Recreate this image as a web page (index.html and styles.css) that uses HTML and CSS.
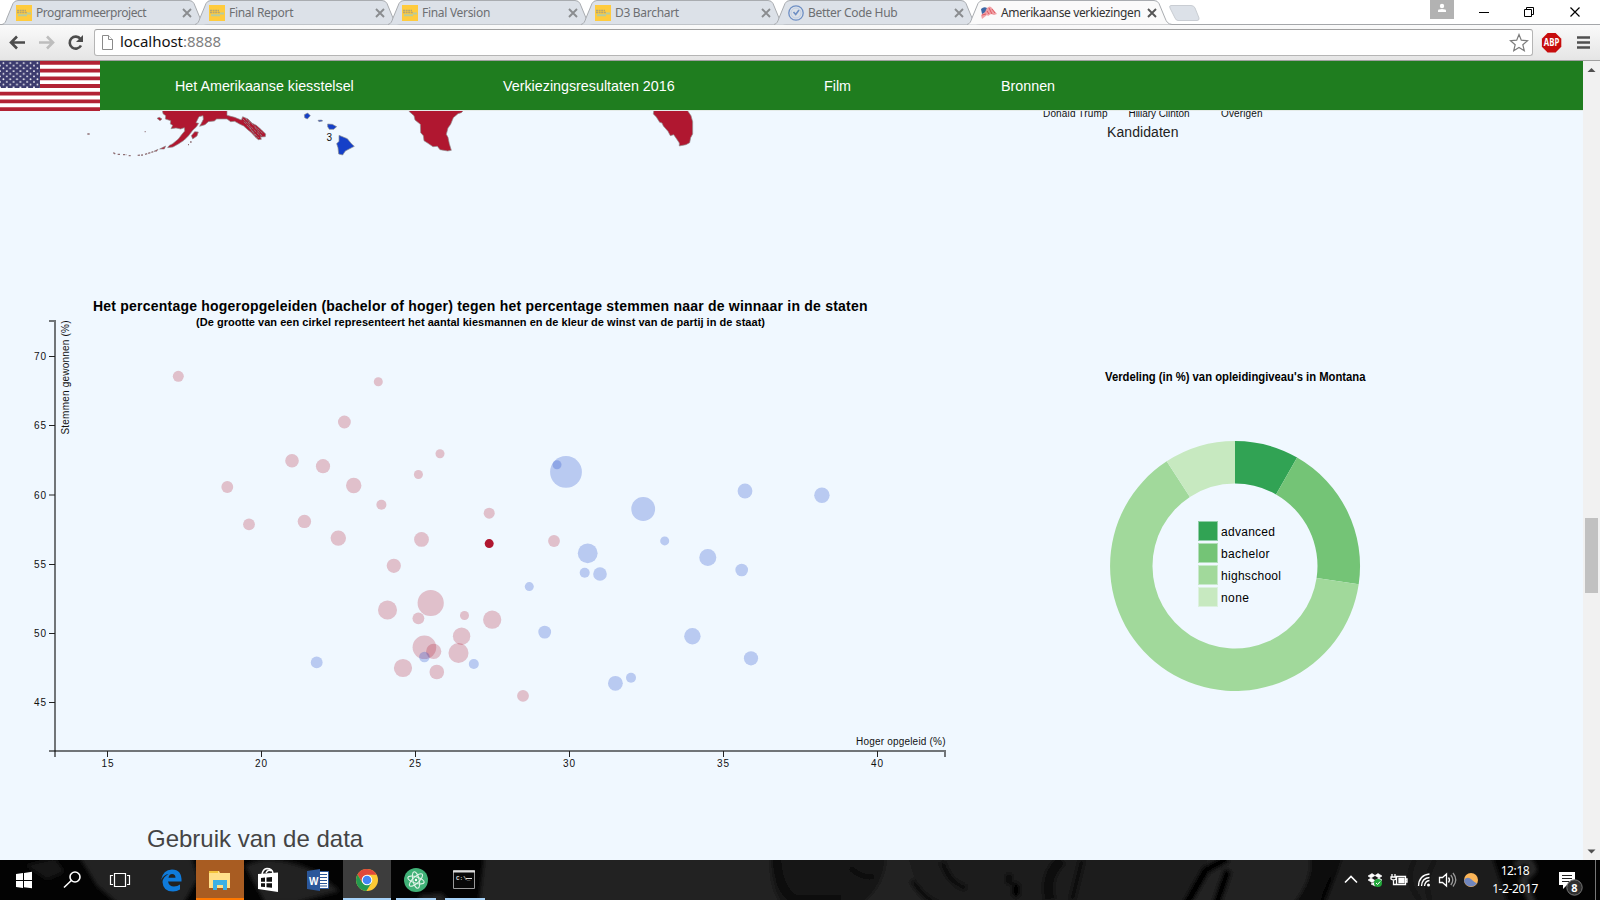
FILE: index.html
```html
<!DOCTYPE html>
<html lang="nl">
<head>
<meta charset="utf-8">
<title>Amerikaanse verkiezingen</title>
<link rel="stylesheet" href="styles.css">
</head>
<body>
<svg class="defs" width="0" height="0">
  <defs>
    <symbol id="tab-shape" viewBox="0 0 208 25">
      <path d="M0 24.5C3 24 4 21 5 18L11 3.5Q12.500 .5 16 .5H187Q190.500 .5 192 3.500L198 18C199.500 22 201 24 205 24.500"/>
    </symbol>
    <symbol id="site" viewBox="0 0 16 16">
      <rect width="16" height="16" fill="#ffcb3d"/>
      <path d="M1 5.500h9M1 7.500h10" stroke="#b5a672" stroke-width="1.300" stroke-dasharray="2 .6"/>
      <path d="M2 10.200h9M11 8.500h4" stroke="#b5cba0" stroke-width="2"/>
    </symbol>
    <symbol id="cross" viewBox="0 0 10 10"><path d="M1 1l8 8M9 1L1 9" stroke="currentColor" stroke-width="1.900"/></symbol>
  </defs>
</svg>

<div class="tabstrip">
  <div class="tab"><svg class="shape"><use href="#tab-shape"/></svg><svg class="fav"><use href="#site"/></svg><span class="t1">Programmeerproject</span><svg class="x"><use href="#cross"/></svg></div>
  <div class="tab"><svg class="shape"><use href="#tab-shape"/></svg><svg class="fav"><use href="#site"/></svg><span>Final Report</span><svg class="x"><use href="#cross"/></svg></div>
  <div class="tab"><svg class="shape"><use href="#tab-shape"/></svg><svg class="fav"><use href="#site"/></svg><span>Final Version</span><svg class="x"><use href="#cross"/></svg></div>
  <div class="tab"><svg class="shape"><use href="#tab-shape"/></svg><svg class="fav"><use href="#site"/></svg><span>D3 Barchart</span><svg class="x"><use href="#cross"/></svg></div>
  <div class="tab"><svg class="shape"><use href="#tab-shape"/></svg><svg class="fav" viewBox="0 0 16 16" fill="none" stroke="#6e8fc4"><circle cx="8" cy="8" r="7.200" stroke-width="1.300"/><circle cx="8" cy="8" r="5" stroke="#b9c9e2" stroke-width=".8"/><path d="M5.500 7l2.200 2.500L11 5" stroke-width="1.600"/></svg><span>Better Code Hub</span><svg class="x"><use href="#cross"/></svg></div>
  <div class="tab active"><svg class="shape"><use href="#tab-shape"/></svg><svg class="fav" viewBox="0 0 16 16"><path d="M0 4Q3 1 6 3L5 8 1 9z" fill="#3c67a5"/><path d="M6 3q3-3 5 0l5 6-3 1-3-1-3 2-1-1-5 4-1-4 4-3z" fill="#f0a0a5"/><path d="M8 3l3 6M6 6l2 3M11 4l3 4M1 10l4-1" stroke="#df5a62"/></svg><span class="t6">Amerikaanse verkiezingen</span><svg class="x"><use href="#cross"/></svg></div>
  <svg class="newtab" width="34" height="24"><path d="M3 5.500H23Q26 5.500 27 8L31 18Q31.500 20.500 29 20.500H10Q8 20.500 7 18L2 8Q1 5.500 3 5.500z" fill="#dce1e8" stroke="#c9cdd3"/></svg>
  <div class="wincontrols">
    <svg width="24" height="19"><rect width="24" height="19" fill="#b2b2b2"/><circle cx="12" cy="6" r="2.200" fill="#fff"/><path d="M8 12V10.500Q8 9 12 9T16 10.500V12z" fill="#fff"/></svg>
    <svg class="ctl" viewBox="0 0 130 24" fill="none" stroke="#000"><path d="M9 12.500H19"/><path d="M54.500 9.500h7v7h-7zM56.500 9.500v-2h7v7h-2"/><path d="M100.500 7.500l9 9M109.500 7.500l-9 9" stroke-width="1.200"/></svg>
  </div>
</div>

<div class="toolbar">
  <svg width="94" height="36" viewBox="0 25 94 36" fill="none" stroke-width="2.600">
    <path d="M25 42.500H11.500M17 36.500l-6 6 6 6" stroke="#4c4c4c"/>
    <path d="M39 42.500H52.500M47 36.500l6 6-6 6" stroke="#bdbdbd"/>
    <path d="M80.500 39A6 6 0 1 0 81 45.500" stroke="#4c4c4c"/><path d="M83 35v7h-7z" fill="#4c4c4c"/>
  </svg>
  <div class="omnibox">
    <svg width="14" height="17" viewBox="0 0 14 17" fill="#fff" stroke="#8a8a8a"><path d="M1.500 1.500h6l4 4v10h-10z"/><path d="M7.500 1.500v4h4"/></svg>
    <span class="url">localhost<span class="port">:8888</span></span>
    <svg class="star" width="20" height="20" viewBox="0 0 20 20"><path d="M10 1.500l2.300 5.700 6.200.5-4.700 4 1.500 6L10 14.400l-5.300 3.300 1.500-6-4.700-4 6.200-.5z" fill="#fff" stroke="#7c7c7c" stroke-width="1.200"/></svg>
  </div>
  <svg width="67" height="36" viewBox="1533 25 67 36">
    <path d="M1547.600 33h8l5.700 5.700v8l-5.700 5.700h-8l-5.700-5.700v-8z" fill="#c70d0d"/>
    <text x="1543.800" y="46.300" textLength="15.500" lengthAdjust="spacingAndGlyphs" class="abp">ABP</text>
    <path d="M1577 37.500h13M1577 42.500h13M1577 47.500h13" stroke="#505050" stroke-width="2.700"/>
  </svg>
</div>

<div class="viewport">
  <div class="page">
    <nav class="nav">
      <svg class="flag" viewBox="0 0 100 50" width="100" height="50">
        <defs><pattern id="stars" width="6.800" height="5.400" patternUnits="userSpaceOnUse"><circle cx="3.400" cy="2" r=".9" fill="#fff"/><circle cx="0" cy="4.700" r=".9" fill="#fff"/><circle cx="6.800" cy="4.700" r=".9" fill="#fff"/></pattern></defs>
        <rect width="100" height="50" fill="#fff"/>
        <path d="M0 1.920H100M0 9.610H100M0 17.310H100M0 25H100M0 32.690H100M0 40.380H100M0 48.080H100" stroke="#b22234" stroke-width="3.850"/>
        <rect width="40" height="27" fill="#3c3b6e"/><rect width="40" height="27" fill="url(#stars)"/>
      </svg>
      <a class="n1">Het Amerikaanse kiesstelsel</a>
      <a class="n2">Verkiezingsresultaten 2016</a>
      <a class="n3">Film</a>
      <a class="n4">Bronnen</a>
    </nav>

    <svg class="map" viewBox="0 111 1583 169" width="1583" height="169">
      <g transform="scale(.33333)" stroke="#8f8f8f" stroke-width="2" stroke-linejoin="round">
        <g fill="#b01730">
          <path d="M486 325L489 341 497 347 496 357 512 362 511 372 518 376 513 386 528 384 542 387 553 383 554 393 544 405 535 417 518 431 507 437 503 443 519 441 535 432 552 421 565 408 579 390 589 381 596 370 588 368 597 350 609 347 610 358 604 370 599 379 615 374 625 365 643 363 650 357 681 357 692 365 704 364 720 373 731 378 743 389 753 397 765 410 775 419 784 418 782 411 796 410 797 402 784 389 769 376 757 370 744 357 728 350 724 360 704 352 681 346 681 325z"/>
          <path d="M471 355l7-3 8 5-6 5zM574 407l10-12 11 1-4 12-13 9zM497 438l-18 9 14 0zM474 448l-12 6 8 0z"/>
          <path d="M26 325L28 335 42 347 45 360 61 373 62 398 70 407 72 422 84 430 99 440 112 439 120 449 143 453 154 451 148 431 144 412 139 403 144 384 152 373 160 353 174 341 184 338 190 332V325z" transform="translate(1200)"/>
          <path d="M1962 325l-2 17 9 9 10 16 7 2 4 9 14 16 7 13 10-3 9 13 8 12 0 9 20-4 11-6 3-15 6-11 0-37-5-18-9-13v-10z"/>
        </g>
        <path d="M728 356l54 53M732 365l44 49M745 362l43 38M748 380l22 35M737 355l14 20M765 382l21 27" stroke-width="2.500" stroke-dasharray="9 3" fill="none"/>
        <path d="M262 402h8M434 395h3M564 434h3M570 426h5M340 458l6 4M353 463h7M369 464h11M386 467h6M413 466l16-1M435 463l25-8" fill="none" stroke="#8f7075" stroke-width="4" stroke-dasharray="7 3"/>
        <g fill="#1540c8">
          <path d="M913 344l10-5 8 8-9 10-8-4zM954 361l11-1 3 3-11 2zM983 372l14 1 13 7-9 8-13 0-5-8zM1017 406l25 10 13 16 8 7-27 14-8 12-12-3-2-19-4-12 7-7z"/>
        </g>
      </g>
      <g class="t10">
        <text x="326.500" y="141" textLength="5.500">3</text>
        <text x="1043" y="117.200" textLength="64.500">Donald Trump</text>
        <text x="1128.500" y="117.200" textLength="61">Hillary Clinton</text>
        <text x="1221" y="117.200" textLength="41.500">Overigen</text>
      </g>
      <text x="1107" y="137" class="t14" textLength="71.500">Kandidaten</text>
    </svg>

    <div class="charts">
      <svg viewBox="0 280 1000 506" width="1000" height="506">
        <g class="bold">
          <text x="93" y="311" font-size="14" textLength="774.500">Het percentage hogeropgeleiden (bachelor of hoger) tegen het percentage stemmen naar de winnaar in de staten</text>
          <text x="196" y="326" font-size="11" textLength="569">(De grootte van een cirkel representeert het aantal kiesmannen en de kleur de winst van de partij in de staat)</text>
        </g>
        <g stroke="#000" stroke-opacity=".53" stroke-width="2" fill="none">
          <path d="M49 321H55V751H49"/>
          <path d="M55 757V751H945V757"/>
        </g>
        <path d="M49 356.500h6M49 425.500h6M49 495h6M49 564.500h6M49 633.500h6M49 702.500h6M107.500 751v6M261.500 751v6M415.500 751v6M569.500 751v6M723.500 751v6M877.500 751v6" stroke="#222"/>
        <g class="t10">
          <text x="34" y="360.300" textLength="12">70</text><text x="34" y="429.300" textLength="12">65</text><text x="34" y="498.500" textLength="12">60</text><text x="34" y="568" textLength="12">55</text><text x="34" y="637" textLength="12">50</text><text x="34" y="706.300" textLength="12">45</text>
          <text x="101.500" y="767" textLength="12">15</text><text x="255" y="767" textLength="12">20</text><text x="409" y="767" textLength="12">25</text><text x="563" y="767" textLength="12">30</text><text x="717" y="767" textLength="12">35</text><text x="871" y="767" textLength="12">40</text>
        </g>
        <text class="t10" x="856" y="745" textLength="89.500">Hoger opgeleid (%)</text>
        <text class="t10" transform="translate(68.500 434.500) rotate(-90)" textLength="114">Stemmen gewonnen (%)</text>
        <g class="rep">
          <circle cx="178.300" cy="376.300" r="5.500"/><circle cx="378.300" cy="381.700" r="4.500"/><circle cx="344.400" cy="422" r="6.400"/><circle cx="292" cy="460.700" r="6.800"/><circle cx="323" cy="466.200" r="7.100"/><circle cx="440" cy="453.700" r="4.500"/><circle cx="418.400" cy="474.500" r="4.500"/><circle cx="227.300" cy="487" r="5.900"/><circle cx="353.700" cy="485.500" r="7.700"/><circle cx="381.400" cy="504.800" r="5"/><circle cx="249" cy="524.300" r="5.900"/><circle cx="304.400" cy="521.400" r="6.700"/><circle cx="338.300" cy="538.100" r="7.700"/><circle cx="421.500" cy="539.400" r="7.400"/><circle cx="489.200" cy="513.200" r="5.500"/><circle cx="393.800" cy="565.800" r="7.100"/><circle cx="554" cy="541" r="5.900"/><circle cx="430.700" cy="603" r="13.100"/><circle cx="387.500" cy="610" r="9.500"/><circle cx="418.400" cy="618.300" r="5.900"/><circle cx="464.500" cy="615.500" r="4.500"/><circle cx="492.200" cy="619.700" r="9.100"/><circle cx="461.600" cy="636.200" r="8.700"/><circle cx="424.400" cy="647.300" r="11.800"/><circle cx="433.700" cy="651.400" r="7.600"/><circle cx="458.500" cy="653" r="10"/><circle cx="403" cy="668" r="9.100"/><circle cx="436.800" cy="672" r="7.300"/><circle cx="523" cy="695.800" r="5.900"/>
          <circle class="on" cx="489.200" cy="543.600" r="4.500"/>
        </g>
        <g class="dem">
          <circle cx="566" cy="471.900" r="15.900"/><circle cx="557" cy="464.700" r="4.500"/><circle cx="745" cy="491" r="7.400"/><circle cx="821.900" cy="495.300" r="7.700"/><circle cx="643.200" cy="509" r="11.900"/><circle cx="664.700" cy="540.900" r="4.500"/><circle cx="587.700" cy="553.300" r="9.900"/><circle cx="584.700" cy="572.700" r="5"/><circle cx="600" cy="574" r="6.800"/><circle cx="707.800" cy="557.400" r="8.500"/><circle cx="741.700" cy="570" r="6.300"/><circle cx="424.400" cy="657" r="5.300"/><circle cx="316.700" cy="662.400" r="5.900"/><circle cx="473.800" cy="664" r="5"/><circle cx="529.300" cy="586.600" r="4.500"/><circle cx="544.700" cy="632.100" r="6.400"/><circle cx="692.400" cy="636.200" r="8.200"/><circle cx="751" cy="658.300" r="7.100"/><circle cx="615.400" cy="683.300" r="7.400"/><circle cx="631" cy="677.700" r="5"/>
        </g>
      </svg>

      <svg viewBox="1000 280 583 506" width="583" height="506">
        <text class="bold" x="1105" y="381" font-size="12" textLength="260.500" lengthAdjust="spacingAndGlyphs">Verdeling (in %) van opleidingiveau's in Montana</text>
        <path fill="#31a354" d="M1235 441A125 125 0 0 1 1297.100 457.500L1276 494.400A82.500 82.500 0 0 0 1235 483.500z"/>
        <path fill="#74c476" d="M1297.100 457.500A125 125 0 0 1 1358.700 584.300L1316.600 578.050A82.500 82.500 0 0 0 1276 494.400z"/>
        <path fill="#a1d99b" d="M1358.700 584.300A125 125 0 1 1 1166.700 461.300L1189.900 496.900A82.500 82.500 0 1 0 1316.600 578.050z"/>
        <path fill="#c7e9c0" d="M1166.700 461.300A125 125 0 0 1 1235 441V483.500A82.500 82.500 0 0 0 1189.900 496.900z"/>
        <g class="legend">
          <rect x="1199" y="522" width="18" height="18" fill="#31a354" stroke="#31a354"/><rect x="1199" y="544" width="18" height="18" fill="#74c476" stroke="#74c476"/><rect x="1199" y="566" width="18" height="18" fill="#a1d99b" stroke="#a1d99b"/><rect x="1199" y="588" width="18" height="18" fill="#c7e9c0" stroke="#c7e9c0"/>
          <text x="1221" y="536" textLength="54">advanced</text><text x="1221" y="558" textLength="48.500">bachelor</text><text x="1221" y="580" textLength="60">highschool</text><text x="1221" y="602" textLength="28">none</text>
        </g>
      </svg>
    </div>
    <h2>Gebruik van de data</h2>
  </div>
  <div class="scrollbar">
    <svg width="17" height="17"><path d="M4.500 11L8.500 7 12.500 11z" fill="#505050"/></svg>
    <div class="thumb"></div>
    <svg width="17" height="17"><path d="M4.500 6.500L8.500 10.500 12.500 6.500z" fill="#505050"/></svg>
  </div>
</div>

<div class="taskbar">
  <svg class="wall" viewBox="0 860 1600 40" width="1600" height="40">
    <defs><filter id="soft"><feGaussianBlur stdDeviation="2"/></filter></defs>
    <rect y="860" width="1600" height="40" fill="#030303"/>
    <g filter="url(#soft)">
      <path d="M25 865l30-7 10 14-18 8z" fill="#121212"/>
      <path d="M75 850H190L198 878 180 910H125L97 886z" fill="#212121"/>
      <path d="M245 866q25-15 70 5l25 20-45 12h-30zM345 870l40-15v45l-40-7zM420 895l22-2 10 12h-35z" fill="#202020"/>
      <path d="M485 850H1320L1300 910H478z" fill="#242424"/>
      <path d="M908 850H1210L1190 910H945Q910 885 908 850z" fill="#1a1a1a"/>
      <path d="M772 850q-5 40 15 60h65q35-20 34-60z" fill="#151515"/>
      <path d="M776 850q0 40 20 50h45" stroke="#090909" stroke-width="9" fill="none"/>
      <path d="M850 868q15 12 24 8" stroke="#0d0d0d" stroke-width="5" fill="none"/>
      <path d="M912 880q12 20 28 25M942 862q8 22 24 26M1082 860l-10 40" stroke="#0e0e0e" stroke-width="6" fill="none"/>
      <path d="M1062 860q-18 15-12 40" stroke="#0e0e0e" stroke-width="11" fill="none"/>
      <ellipse cx="1009" cy="879" rx="3" ry="6" fill="#020202"/><ellipse cx="1016" cy="890" rx="4" ry="8" fill="#020202"/>
      <path d="M1228 858l-22 12-20 35M1228 870l-12 35" stroke="#020202" stroke-width="8" fill="none"/>
      <path d="M1310 855h35q-20 25-25 50h-28q22-25 18-50z" fill="#080808"/>
      <path d="M1345 850H1490L1510 910H1322z" fill="#1e1e1e"/>
      <path d="M1415 860q-12 20 5 40M1435 860q-12 20-5 40" stroke="#0c0c0c" stroke-width="3" fill="none"/>
      <path d="M1515 866q15-12 18 4l-10 10 10 25" stroke="#2b2b2b" stroke-width="7" fill="none"/>
    </g>
    <path d="M1595.500 860v40" stroke="#777"/>
  </svg>
  <div class="apps">
    <svg viewBox="0 0 48 40"><path d="M16 14l7-1v7h-7zM24 12.900l8-1.100V20h-8zM16 21h7v7l-7-1zM24 21h8v7.200l-8-1z" fill="#fff"/></svg>
    <svg viewBox="48 0 48 40" fill="none" stroke="#fff" stroke-width="1.600"><circle cx="75" cy="17" r="5"/><path d="M71.300 20.500L64 27.500"/></svg>
    <svg viewBox="96 0 48 40" fill="none" stroke="#fff" stroke-width="1.200"><path d="M114.500 13.500h11v13h-11zM113 15.500h-2.500v9h2.500M127 15.500h2.500v9h-2.500"/></svg>
    <svg viewBox="148 0 48 40"><path d="M161 20q2-10.500 11-10.500 10 0 9.500 12H168q1 5 6 5 3.500 0 6-2v5q-3 2-7 2-10 0-10.500-9.500.5-5 6-8-4.500.5-7.500 6zM168.500 17.800h7q0-3.800-3.400-3.800-3 0-3.600 3.800z" fill="#0f7bdb" fill-rule="evenodd"/></svg>
    <svg class="files" viewBox="196 0 48 40"><path d="M209 11h10l1 2h10v15H209z" fill="#ffe08a"/><path d="M209 11h9v2h-9z" fill="#f3c43c"/><path d="M213 30V20h14v10h-4v-5h-6v5z" fill="#3cb0e5"/></svg>
    <svg viewBox="244 0 48 40"><path d="M258 14l20-1.500V32L258 29z" fill="#fff"/><path d="M262 14q1-5 5-5.500 5 0 6 4.500M266 13q2-4 5-2" fill="none" stroke="#fff" stroke-width="1.500"/><path d="M261 18l4-.4v4.200h-4zM266.500 17.500l5.500-.5v4.800h-5.500zM261 23.200h4v3.900l-4-.4zM266.500 23.200h5.500v4.600l-5.500-.5z" fill="#111"/></svg>
    <svg viewBox="292 0 48 40"><path d="M316 11.500h12.500v17H316z" fill="#fff" stroke="#2b579a"/><path d="M319 14.500h8M319 17.500h8M319 20.500h8M319 23.500h8M319 26h8" stroke="#2b579a"/><path d="M307 11l13-2v22l-13-2z" fill="#2b579a"/><text x="309" y="24.500" class="word">W</text></svg>
    <svg class="chrome" viewBox="343 0 48 40"><circle cx="367" cy="20" r="11" fill="#fcc934"/><path d="M357.500 14.500A11 11 0 0 1 376.600 14.700H367L362.300 22.700z" fill="#e0483b"/><path d="M357.500 14.500A11 11 0 0 0 366.300 31L371.700 22.500 362.300 22.700z" fill="#24994f"/><circle cx="367" cy="20" r="5.300" fill="#fff"/><circle cx="367" cy="20" r="4.300" fill="#4285f4"/></svg>
    <svg class="run" viewBox="392 0 48 40"><circle cx="416" cy="20" r="12" fill="#40b177"/><g fill="none" stroke="#e0f3e8" stroke-width="1.100"><ellipse cx="416" cy="20" rx="8.500" ry="3.200" transform="rotate(17 416 20)"/><ellipse cx="416" cy="20" rx="8.500" ry="3.200" transform="rotate(77 416 20)"/><ellipse cx="416" cy="20" rx="8.500" ry="3.200" transform="rotate(137 416 20)"/></g><circle cx="416" cy="20" r="1.200" fill="#fff"/></svg>
    <svg class="run" viewBox="441 0 48 40"><path d="M453.500 10.500h21v18h-21z" fill="#080808" stroke="#999"/><path d="M453 11.500h22" stroke="#ddd" stroke-width="2"/><text x="456" y="19.500" class="cmd">C:\_</text><path d="M466 18.500h6" stroke="#ddd"/></svg>
  </div>
  <div class="tray">
    <svg width="140" height="40" viewBox="1340 860 140 40" fill="none" stroke="#fff" stroke-width="1.300">
      <path d="M1345 882.500l6-6 6 6" stroke-width="1.600"/>
      <path d="M1368 876l4-2.500 3 2-4 2.500zM1375 875.500l3-2 4 2.500-3 2zM1368 880l3-2 4 2.500-3 2zM1375 880.500l4-2.500 3 2-4 2.500zM1371 884l4-2 4 2-4 2z" fill="#fff" stroke-width=".6"/><circle cx="1378" cy="883" r="4" fill="#22a83b" stroke="none"/><path d="M1376 883l1.500 1.500 2.700-3" stroke-width="1"/>
      <path d="M1396.500 876.500h9v8h-9zM1406 879h1v3h-1M1392 874v3M1395 874v3M1391 877h5v2q-2.500 2-5 0zM1393.500 880v4.500h3"/><path d="M1399 878.500h5v4h-5z" fill="#fff"/>
      <path d="M1418.500 886Q1419 875 1429.500 874M1421.500 886Q1422 878 1429.500 877.500M1424.500 886Q1425 881 1429.500 880.500"/><circle cx="1428.500" cy="885" r="1.500" fill="#fff" stroke="none"/>
      <path d="M1439.500 877.500h3l4-3.500v12l-4-3.500h-3zM1448.500 877.500q2 2.500 0 5"/><path d="M1450.800 875q4 5 0 10M1453 873q5.500 7 0 13.500" stroke="#999"/>
      <circle cx="1471" cy="880" r="7" fill="#fbb558" stroke="none"/><path d="M1464 880q3-4 7-1 4 4 6 4a7 7 0 0 1-13-3z" fill="#7086bd" stroke="none"/>
    </svg>
    <div class="clock"><span class="time">12:18</span><span class="date">1-2-2017</span></div>
    <svg width="50" height="40" viewBox="1550 860 50 40"><path d="M1559 872h16v13h-8l-4 4v-4h-4z" fill="#fff"/><path d="M1562 875.500h10M1562 878.500h10M1562 881.500h7" stroke="#222"/><circle cx="1574.500" cy="887.500" r="7.700" fill="#303030" stroke="#777"/><text x="1574.500" y="891.500" class="count" text-anchor="middle">8</text></svg>
  </div>
</div>
</body>
</html>
```

FILE: styles.css
```css
* { box-sizing: border-box; }
body {
  margin: 0;
  width: 1600px;
  height: 900px;
  overflow: hidden;
  display: flex;
  flex-direction: column;
  background: #fff;
  font-family: "Liberation Sans", Arial, sans-serif;
}
svg { display: block; flex: none; }
.defs { position: absolute; }

/* Tab strip */
.tabstrip {
  display: flex;
  height: 25px;
  flex: none;
  padding-left: 2px;
  border-bottom: 1px solid #a5a7aa;
  font-family: "Noto Sans", "Open Sans", sans-serif;
  font-size: 12px;
}
.tab {
  position: relative;
  width: 208px;
  height: 25px;
  flex: none;
  margin-right: -15px;
  padding: 1px 18px 0 14px;
  display: flex;
  align-items: center;
  color: #6d6f72;
  letter-spacing: -0.3px;
}
.tab .shape {
  position: absolute;
  left: 0;
  top: 0;
  width: 208px;
  height: 25px;
  fill: #dce1e8;
  stroke: #a9acb0;
}
.tab .fav { position: relative; width: 16px; height: 16px; margin-right: 4px; }
.tab span { position: relative; flex: 1; white-space: nowrap; line-height: 24px; }
.tab .t1 { letter-spacing: -0.45px; }
.tab .t6 { letter-spacing: -0.37px; }
.tab .x { position: relative; width: 10px; height: 10px; flex: none; color: #8a8c8f; }
.tab.active { color: #333; }
.tab.active .shape { fill: #fafafa; }
.tab.active .x { color: #555; }
.newtab { margin-left: 8px; }
.wincontrols { display: flex; margin-left: auto; }
.ctl { width: 130px; height: 24px; margin-left: 16px; }

/* Address bar */
.toolbar {
  height: 36px;
  flex: none;
  display: flex;
  background: linear-gradient(#fafafa, #e5e5e5);
  border-bottom: 1px solid #a0a0a0;
}
.omnibox {
  flex: 1;
  height: 27px;
  margin-top: 4px;
  border: 1px solid #b5b5b5;
  border-top-color: #a0a0a0;
  border-radius: 3px;
  background: #fff;
  display: flex;
  align-items: center;
  padding: 0 3px 0 6px;
}
.url {
  flex: 1;
  margin-left: 5px;
  padding-bottom: 2px;
  font: 15px/23px "Noto Sans", "Open Sans", sans-serif;
  color: #111;
  letter-spacing: -0.05px;
}
.port { color: #808080; }
.abp { font: bold 10px "Open Sans", sans-serif; fill: #fff; }

/* Web page */
.viewport { display: flex; height: 799px; flex: none; }
.page { width: 1583px; background: #f0f8ff; overflow: hidden; }
.nav {
  display: flex;
  height: 50px;
  background: linear-gradient(#1f7d1f 49px, #e4ebe8 49px);
  color: #fff;
  font-size: 14.3px;
  line-height: 50px;
  white-space: nowrap;
}
.n1 { margin-left: 75px; width: 328px; }
.n2 { width: 321px; }
.n3 { width: 177px; }
.t10 { font-size: 10px; fill: #111; }
.t14 { font-size: 14px; fill: #222; }
.bold { font-weight: bold; fill: #000; }
.charts { display: flex; }
.rep circle { fill: #b01730; opacity: .25; }
.rep .on { opacity: 1; }
.dem circle { fill: #1540c8; opacity: .25; }
.legend rect { stroke-width: 2; stroke-opacity: .5; }
.legend text { font-size: 12px; fill: #000; }
h2 {
  margin: 38px 0 0 147px;
  font-size: 24px;
  line-height: 30px;
  font-weight: normal;
  color: #444;
}
.scrollbar {
  width: 17px;
  background: #f1f1f1;
  display: flex;
  flex-direction: column;
}
.thumb { width: 13px; height: 75px; margin: 440px 2px auto; background: #c1c1c1; }

/* Windows taskbar */
.taskbar { position: relative; height: 40px; flex: none; display: flex; justify-content: space-between; }
.wall { position: absolute; left: 0; top: 0; }
.apps, .tray { position: relative; display: flex; height: 40px; }
.apps svg { width: 48px; height: 40px; }
.apps svg:nth-child(4) { margin-left: 4px; }
.apps .files { background: linear-gradient(#ff7800, #ff7800) 0 38px / 48px 2px no-repeat #a85c22; }
.apps .chrome { background: linear-gradient(#a6d2f8, #a6d2f8) 0 38px / 48px 2px no-repeat #3d3d3d; margin-left: 3px; }
.apps .run { margin-left: 1px; background: linear-gradient(#a6d2f8, #a6d2f8) 4px 38px / 40px 2px no-repeat; }
.word { font: bold 10px "Liberation Sans", sans-serif; fill: #fff; }
.cmd { font: bold 6px "Liberation Mono", monospace; fill: #ddd; }
.clock {
  width: 70px;
  display: flex;
  flex-direction: column;
  align-items: center;
  color: #fff;
  font: 12px/18px "Noto Sans", "Open Sans", sans-serif;
  padding-top: 2px;
  letter-spacing: -0.4px;
}
.count { font: bold 11px "Noto Sans", sans-serif; fill: #fff; }
```
